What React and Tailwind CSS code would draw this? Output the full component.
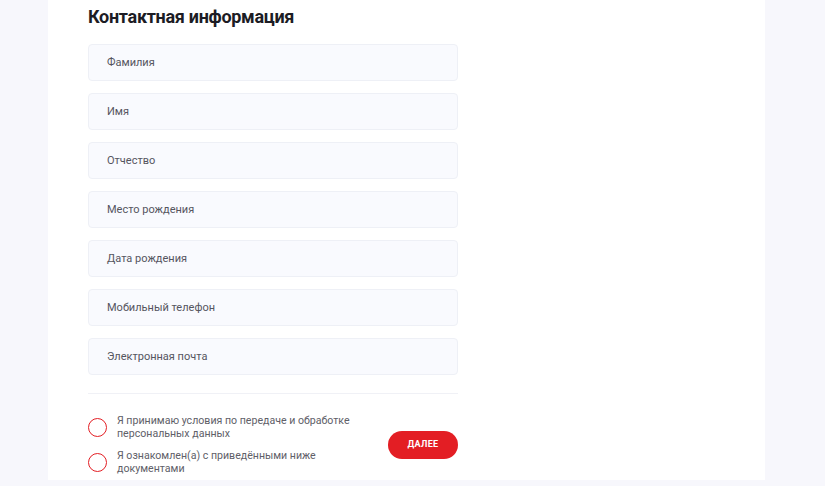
import React from "react";

const fields = [
  "Фамилия",
  "Имя",
  "Отчество",
  "Место рождения",
  "Дата рождения",
  "Мобильный телефон",
  "Электронная почта",
];

export default function App() {
  return (
    <div
      className="w-[825px] h-[486px] bg-[#f7f7fc] overflow-hidden"
      style={{ fontFamily: "Roboto, 'Noto Sans', sans-serif" }}
    >
      <div className="ml-[48px] w-[717px] h-[480px] bg-white pl-[40px] pt-[4px]">
        <h2 className="text-[18px] leading-[26px] font-bold text-[#1c1c24] tracking-[-0.3px]">
          Контактная информация
        </h2>
        <div className="mt-[14px] w-[370px] flex flex-col gap-[12px]">
          {fields.map((f) => (
            <div
              key={f}
              className="h-[37px] rounded-[4px] border border-[#eef0f6] bg-[#f9fafe] flex items-center pl-[18px] pt-px text-[11px] text-[#55555e]"
            >
              {f}
            </div>
          ))}
        </div>
        <div className="mt-[18px] w-[370px] h-px bg-[#f0f1f6]" />
        <div className="w-[370px] flex items-center justify-between mt-[20px]">
          <div className="flex flex-col gap-[9px]">
            <div className="flex items-center gap-[10px]">
              <div className="w-[19px] h-[19px] rounded-full border-[1.5px] border-[#e31e24] shrink-0" />
              <div className="text-[10.6px] leading-[13px] text-[#606068] w-[250px]">
                Я принимаю условия по передаче и обработке персональных данных
              </div>
            </div>
            <div className="flex items-center gap-[10px]">
              <div className="w-[19px] h-[19px] rounded-full border-[1.5px] border-[#e31e24] shrink-0" />
              <div className="text-[10.6px] leading-[13px] text-[#606068] w-[225px]">
                Я ознакомлен(а) с приведёнными ниже документами
              </div>
            </div>
          </div>
          <button className="w-[70px] h-[28px] rounded-full bg-[#e31e24] text-white text-[9px] font-bold tracking-[0.3px]">
            ДАЛЕЕ
          </button>
        </div>
      </div>
    </div>
  );
}
